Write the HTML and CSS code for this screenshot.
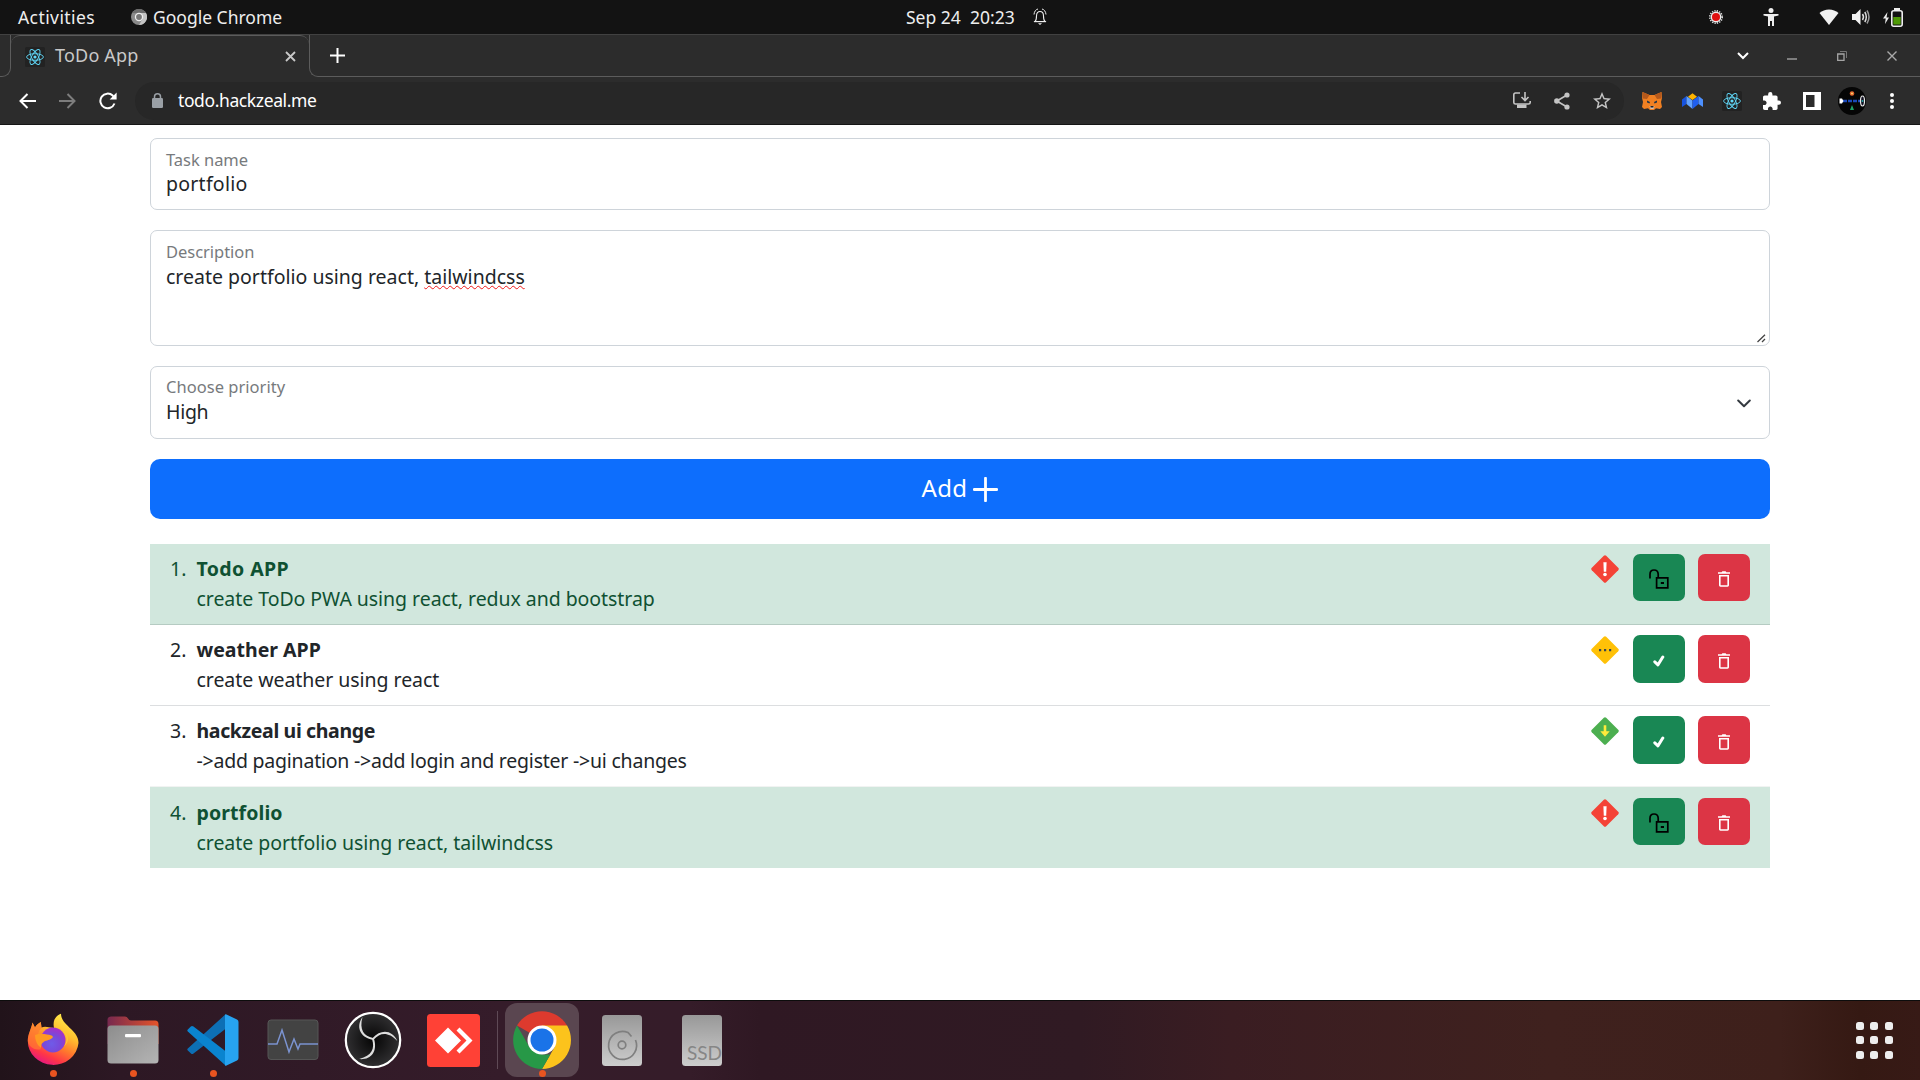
FILE: index.html
```html
<!DOCTYPE html>
<html lang="en">
<head>
<meta charset="utf-8">
<title>ToDo App</title>
<link rel="stylesheet" href="styles.css">
</head>
<body>
<svg class="defs" width="0" height="0">
  <defs>
    <linearGradient id="gFox" x1="0.8" y1="0" x2="0.3" y2="1"><stop offset="0" stop-color="#fff14f"/><stop offset=".35" stop-color="#ffc02f"/><stop offset=".6" stop-color="#ff7a2c"/><stop offset=".82" stop-color="#ff3647"/><stop offset="1" stop-color="#e31587"/></linearGradient>
    <radialGradient id="gGlobe" cx=".45" cy=".65" r=".6"><stop offset="0" stop-color="#6f5be8"/><stop offset=".6" stop-color="#7a48d8"/><stop offset="1" stop-color="#a233c9"/></radialGradient>
    <linearGradient id="gFolderBack" x1="0" y1="0" x2="1" y2="0"><stop offset="0" stop-color="#77294f"/><stop offset="1" stop-color="#e5542a"/></linearGradient>
    <linearGradient id="gFolder" x1="0" y1="0" x2="1" y2="1"><stop offset="0" stop-color="#8d8d8d"/><stop offset="1" stop-color="#b4b4b4"/></linearGradient>
    <linearGradient id="gDisk" x1="0" y1="0" x2="0" y2="1"><stop offset="0" stop-color="#989898"/><stop offset="1" stop-color="#cdcdcd"/></linearGradient>
    <radialGradient id="gObs"><stop offset="0" stop-color="#050505"/><stop offset="1" stop-color="#302f31"/></radialGradient>
    <symbol id="react" viewBox="0 0 20 20"><rect width="20" height="20" rx="1.5" fill="#222"/><g fill="none" stroke="#61dafb" stroke-width=".9"><ellipse cx="10" cy="10" rx="8.4" ry="3.3"/><ellipse cx="10" cy="10" rx="8.4" ry="3.3" transform="rotate(60 10 10)"/><ellipse cx="10" cy="10" rx="8.4" ry="3.3" transform="rotate(120 10 10)"/></g><circle cx="10" cy="10" r="1.6" fill="#61dafb"/></symbol>
    <symbol id="high" viewBox="0 0 28 28"><path d="M12.8.8a1.7 1.7 0 0 1 2.4 0l12 12a1.7 1.7 0 0 1 0 2.4l-12 12a1.7 1.7 0 0 1-2.4 0l-12-12a1.7 1.7 0 0 1 0-2.4z" fill="#f44336"/><path d="M12.4 7.2h3.2l-.4 9.6h-2.4z" fill="#fff"/><circle cx="14" cy="19.5" r="1.8" fill="#fff"/></symbol>
    <symbol id="unlock" viewBox="0 0 20 20"><path d="M1 9.600V5.200Q1 1 5 1t4.200 4.200V8.600M7.600 8.900h11.200v9.900H7.600z" fill="none" stroke="#000" stroke-width="1.700"/><path d="M11.800 13h3.200v2h-3.200z" fill="#000"/></symbol>
    <symbol id="check" viewBox="0 0 12 12"><path d="M1.800 6.800l3.200 3 4.800-7.800" fill="none" stroke="#fff" stroke-width="3" stroke-linecap="round" stroke-linejoin="round"/></symbol>
    <symbol id="trash" viewBox="0 0 12 16"><path d="M0 1.200h3.600L4.400.3h3.200l.8.9H12v1.500H0zM1 4h10v10.300a1.400 1.400 0 0 1-1.400 1.400H2.400A1.400 1.400 0 0 1 1 14.300zM2.600 5.400v8.800h6.800V5.400z" fill="#fff" fill-rule="evenodd"/></symbol>
  </defs>
</svg>

<header class="topbar">
  <div class="topbar-left">
    <span class="activities">Activities</span>
    <span class="appmenu">
      <svg width="16" height="16" viewBox="0 0 16 16"><circle cx="8" cy="8" r="8" fill="#8a8a8a"/><path d="M8 4h7a8 8 0 0 1-7 12l3.500-6z" fill="#c4c4c4"/><path d="M1.100 4A8 8 0 0 1 15 4H8z" fill="#6c6c6c"/><circle cx="8" cy="8" r="4.200" fill="#eee"/><circle cx="8" cy="8" r="2.900" fill="#777"/></svg>
      <span class="appname">Google Chrome</span>
    </span>
  </div>
  <div class="clock"><span class="date">Sep 24</span><span class="time">20:23</span>
    <svg width="14" height="18" viewBox="0 0 14 18" fill="none" stroke="#eee"><path d="M2 13.500c1.200-1 1.500-2.500 1.500-5.500 0-3 1.500-4.500 3.500-4.500s3.500 1.500 3.500 4.500c0 3 .3 4.500 1.500 5.500z" stroke-width="1.100"/><path d="M1 6.500C1.200 3.500 3 1.300 5 1M13 6.500C12.800 3.500 11 1.300 9 1M1 13.700h12" stroke-width="1"/><path d="M5 15.200h4L7 17z" fill="#eee" stroke="none"/></svg>
  </div>
  <div class="status">
    <svg class="s-rec" width="16" height="16" viewBox="0 0 16 16"><circle cx="8" cy="8" r="6.200" fill="none" stroke="#ddd" stroke-width="1.600" stroke-dasharray="1.300 1.134"/><circle cx="8" cy="8" r="5.400" fill="#eee"/><circle cx="8" cy="8" r="4" fill="#e01010"/></svg>
    <svg class="s-a11y" width="16" height="18" viewBox="0 0 16 18" fill="#eee"><circle cx="8" cy="2.500" r="2.500"/><path d="M.5 6h15v1.600L11 8.500V18H9v-5H7v5H5V8.500L.5 7.600z"/></svg>
    <svg class="s-wifi" width="20" height="16" viewBox="0 0 20 16" fill="#f2f2f2"><path d="M.5 4Q4.500.5 10 .5T19.500 4L10 16z"/></svg>
    <svg class="s-vol" width="18" height="18" viewBox="0 0 18 18" fill="none" stroke="#ddd" stroke-width="1.500"><path d="M0 6h3.500L8.500 1v16L3.500 12H0z" fill="#f2f2f2" stroke="none"/><path d="M10.500 6q2 3 0 6M12.800 4q3 5 0 10"/><path d="M15 2.500q4 6.500 0 13" stroke="#999"/></svg>
    <svg class="s-bat" width="20" height="19" viewBox="0 0 20 19"><path d="M4.500 4L0 10.500h2.700L2 16l4-6.500H3.500z" fill="#eee"/><rect x="8.800" y="2.800" width="10.400" height="15.400" rx="2" fill="none" stroke="#eee" stroke-width="1.600"/><path d="M11 0h6v2h-6z" fill="#eee"/><path d="M10.300 9h7.400v7.500h-7.400z" fill="#4e9a06"/></svg>
  </div>
</header>

<div class="tabstrip">
  <div class="tab-pre"></div>
  <div class="tab">
    <svg width="20" height="20"><use href="#react"/></svg>
    <span class="tab-title">ToDo App</span>
    <svg class="tab-close" width="11" height="11" viewBox="0 0 11 11"><path d="M1 1l9 9M10 1l-9 9" stroke="#c8c8c8" stroke-width="1.800"/></svg>
  </div>
  <div class="tab-rest">
    <svg width="15" height="15" viewBox="0 0 15 15"><path d="M7.500 0v15M0 7.500h15" stroke="#fff" stroke-width="2"/></svg>
    <div class="win">
      <svg class="tab-search" width="12" height="8" viewBox="0 0 12 8"><path d="M1 1l5 5 5-5" fill="none" stroke="#fff" stroke-width="2"/></svg>
      <svg width="10" height="12" viewBox="0 0 10 12"><path d="M0 9h10" stroke="#9a9a9a" stroke-width="1.500"/></svg>
      <svg width="10" height="10" viewBox="0 0 10 10"><path d="M.7 3h6.300v6.300H.7z" fill="none" stroke="#a5a5a5" stroke-width="1.300"/><path d="M3 .5h6.500V7" fill="none" stroke="#777"/></svg>
      <svg width="10" height="10" viewBox="0 0 10 10"><path d="M.5.5l9 9M9.500.5l-9 9" stroke="#aaa" stroke-width="1.400"/></svg>
    </div>
  </div>
</div>

<div class="toolbar">
  <div class="nav">
    <svg width="18" height="16" viewBox="0 0 18 16" fill="none" stroke="#fff" stroke-width="2"><path d="M17 8H2M8.500 1L1.500 8l7 7"/></svg>
    <svg width="18" height="16" viewBox="0 0 18 16" fill="none" stroke="#7d7d7d" stroke-width="2"><path d="M0 8h15M8.500 1l7 7-7 7"/></svg>
    <svg width="18" height="18" viewBox="0 0 18 18"><path d="M15.500 11.500A7.300 7.300 0 1 1 13.700 3.600L16 6" fill="none" stroke="#fff" stroke-width="2"/><path d="M17.600.5v7h-7z" fill="#fff"/></svg>
  </div>
  <div class="omnibox">
    <svg width="11" height="15" viewBox="0 0 11 15"><rect y="5" width="11" height="10" rx="1.200" fill="#9aa0a6"/><path d="M2.500 6V3.800a3 3 0 0 1 6 0V6" fill="none" stroke="#9aa0a6" stroke-width="1.500"/></svg>
    <span class="url">todo.hackzeal.me</span>
    <div class="cells omni-actions">
      <span><svg width="18" height="17" viewBox="0 0 18 17" fill="none" stroke="#c4c4c4" stroke-width="1.600"><path d="M7 1H2.500Q.8 1 .8 2.700V10.500q0 1.500 1.700 1.500h13q1.700 0 1.700-1.500V9"/><path d="M12 0v8M8.500 5L12 8.500 15.500 5"/><path d="M4 12.500h9.500V16H4z" fill="#c4c4c4" stroke="none"/></svg></span>
      <span><svg width="16" height="18" viewBox="0 0 16 18" fill="#c4c4c4"><path d="M2.800 9L13 3M2.800 9L13 15" stroke="#c4c4c4" stroke-width="1.600"/><circle cx="2.800" cy="9" r="2.700"/><circle cx="13" cy="3" r="2.600"/><circle cx="13" cy="15" r="2.600"/></svg></span>
      <span><svg width="18" height="18" viewBox="2 2 20 20" fill="#c4c4c4"><path d="M22 9.240l-7.190-.62L12 2 9.190 8.630 2 9.240l5.460 4.730L5.820 21 12 17.270 18.180 21l-1.630-7.030L22 9.240zM12 15.400l-3.760 2.270 1-4.280-3.320-2.880 4.380-.38L12 6.100l1.710 4.040 4.380.38-3.320 2.880 1 4.280L12 15.400z"/></svg></span>
    </div>
  </div>
  <div class="cells exts">
    <span><svg width="20" height="20" viewBox="0 0 20 20"><path d="M.5 1L7.500 4h5l7-3L20 7l-1 4 1 5-2 2-4-.7L12 19H8l-2-1.700L2 18l-2-2 1-5-1-4z" fill="#f08022"/><path d="M.5 1L7.500 4 5 8 .5 7.500zM19.500 1l-7 3L15 8l4.500-.5z" fill="#b5591c"/><path d="M5 9.500l3 1.500-.5 1.500L5 11.500zM15 9.500L12 11l.5 1.500 2.500-1z" fill="#233447"/><path d="M7.500 15h5l-1 3h-3z" fill="#d7c1b3"/><path d="M8.500 15h3v1.500h-3z" fill="#222"/></svg></span>
    <span><svg width="21" height="16" viewBox="0 0 21 16"><path d="M0 6.500L4.500 3v8L0 14z" fill="#1653e0"/><path d="M4.500 3l6 4.500V16l-6-5z" fill="#63a4ff"/><path d="M16.500 3l-6 4.500V16l6-5z" fill="#1f5ff0"/><path d="M16.500 3L21 6.500V14l-4.500-3z" fill="#4d90ff"/><path d="M10.500.3L15 3.700 10.500 7 6 3.700z" fill="#ffb400"/></svg></span>
    <span><svg width="20" height="20"><use href="#react"/></svg></span>
    <span><svg width="18" height="18" viewBox="2 1 21 21" fill="#fff"><path d="M20.500 11H19V7c0-1.100-.9-2-2-2h-4V3.500a2.500 2.500 0 0 0-5 0V5H4c-1.100 0-1.990.9-1.990 2v3.800H3.500c1.490 0 2.700 1.210 2.700 2.700s-1.210 2.700-2.700 2.700H2V20c0 1.100.9 2 2 2h3.800v-1.500c0-1.490 1.210-2.700 2.700-2.700s2.700 1.210 2.700 2.700V22H17c1.100 0 2-.9 2-2v-4h1.500a2.500 2.500 0 0 0 0-5z"/></svg></span>
    <span><svg width="18" height="18" viewBox="0 0 18 18"><path d="M0 0h18v18H0z" fill="#fff"/><path d="M3 3h8.500v12H3z" fill="#2b2b2b"/></svg></span>
    <span><svg width="28" height="28" viewBox="0 0 28 28"><circle cx="14" cy="14" r="14" fill="#050505"/><path d="M5 14h18" stroke="#1a48b8" stroke-width="2.500" stroke-dasharray="4 1"/><circle cx="14" cy="6.500" r="1.700" fill="#f4d06a" stroke="#e0612a" stroke-width="1.300"/><path d="M1.500 11.500h2.500l1.500 2.500L4 16.500H1.500z" fill="#fff"/><ellipse cx="24.500" cy="14" rx="2" ry="5" fill="#112" stroke="#e8e8e8" stroke-width="1.200"/><circle cx="24.500" cy="14" r="1" fill="#2aa"/><path d="M14 18l2 5h-4z" fill="#1fa067"/></svg></span>
    <span><svg width="4" height="16" viewBox="0 0 4 16" fill="#fff"><circle cx="2" cy="2" r="2"/><circle cx="2" cy="8" r="2"/><circle cx="2" cy="14" r="2"/></svg></span>
  </div>
</div>

<main class="page">
  <div class="field field-name"><label>Task name</label><div class="value">portfolio</div></div>
  <div class="field field-desc"><label>Description</label><div class="value">create portfolio using react, <span class="misspelt">tailwindcss</span></div>
    <svg class="grip" width="9" height="9" viewBox="0 0 9 9"><path d="M.5 8L8 .8M5 8l3-3" stroke="#444" stroke-width="1.300"/></svg></div>
  <div class="field field-prio">
    <div><label>Choose priority</label><div class="value">High</div></div>
    <svg width="14" height="9" viewBox="0 0 14 9"><path d="M1.200 1.500L7 7.200l5.800-5.700" fill="none" stroke="#343a40" stroke-width="2" stroke-linecap="round" stroke-linejoin="round"/></svg>
  </div>
  <button class="add"><span>Add</span><svg width="25" height="25" viewBox="0 0 25 25"><path d="M12.500 1.200v22.600M1.200 12.500h22.600" stroke="#fff" stroke-width="2.800" stroke-linecap="round"/></svg></button>

  <div class="list">
    <div class="row done">
      <span class="num">1.</span>
      <div class="text"><b class="t1">Todo APP</b><p>create ToDo PWA using react, redux and bootstrap</p></div>
      <svg class="prio" width="28" height="28"><use href="#high"/></svg>
      <span class="btn green"><svg width="20" height="20"><use href="#unlock"/></svg></span>
      <span class="btn red"><svg width="12" height="16"><use href="#trash"/></svg></span>
    </div>
    <div class="row">
      <span class="num">2.</span>
      <div class="text"><b>weather APP</b><p>create weather using react</p></div>
      <svg class="prio" width="28" height="28" viewBox="0 0 28 28"><path d="M12.800.8a1.700 1.700 0 0 1 2.400 0l12 12a1.700 1.700 0 0 1 0 2.400l-12 12a1.700 1.700 0 0 1-2.400 0l-12-12a1.700 1.700 0 0 1 0-2.400z" fill="#ffc107"/><path d="M8 13h2.200v2.200H8zM13 13h2.200v2.200H13zM18 13h2.200v2.200H18z" fill="#37474f"/></svg>
      <span class="btn green"><svg width="12" height="12"><use href="#check"/></svg></span>
      <span class="btn red"><svg width="12" height="16"><use href="#trash"/></svg></span>
    </div>
    <div class="row before-done">
      <span class="num">3.</span>
      <div class="text"><b class="t3">hackzeal ui change</b><p class="d3">-&gt;add pagination -&gt;add login and register -&gt;ui changes</p></div>
      <svg class="prio" width="28" height="28" viewBox="0 0 28 28"><path d="M12.800.8a1.700 1.700 0 0 1 2.400 0l12 12a1.700 1.700 0 0 1 0 2.400l-12 12a1.700 1.700 0 0 1-2.400 0l-12-12a1.700 1.700 0 0 1 0-2.400z" fill="#4caf50"/><path d="M12.700 8.200h2.600v6h3.400L14 19.800l-4.700-5.600h3.400z" fill="#ffeb3b"/></svg>
      <span class="btn green"><svg width="12" height="12"><use href="#check"/></svg></span>
      <span class="btn red"><svg width="12" height="16"><use href="#trash"/></svg></span>
    </div>
    <div class="row done">
      <span class="num">4.</span>
      <div class="text"><b class="t4">portfolio</b><p>create portfolio using react, tailwindcss</p></div>
      <svg class="prio" width="28" height="28"><use href="#high"/></svg>
      <span class="btn green"><svg width="20" height="20"><use href="#unlock"/></svg></span>
      <span class="btn red"><svg width="12" height="16"><use href="#trash"/></svg></span>
    </div>
  </div>
</main>

<footer class="dock">
  <div class="app running"><svg width="52" height="54" viewBox="0 0 52 54"><path d="M.8 28C.8 21 4 17 5.500 9.500L8 14.500C9 12 12 10 13.800 9L14.500 14.500Q17 13.500 20 14L27 15C25.500 8 28 3 34 .8 34 7 39 11 44 16 48 20 51.500 24 51.500 30A25.400 24 0 0 1 .8 28z" fill="url(#gFox)"/><path d="M.8 28C1 21 4 17 5.500 9.500L8 14.500C9 12 12 10 13.800 9L14.500 14.500C10 20 8 28 14 36 8 38 1.500 34 .8 28z" fill="#ff7a30" opacity=".7"/><circle cx="26" cy="27" r="12.500" fill="url(#gGlobe)"/><path d="M8 22c5-2 9-1 12-.5 3 .5 5 .5 6 2.500-2 3-5 3-8 4-3 2-4 3-4 7-4-3-6-8-6-13z" fill="#ff9a22"/><path d="M31 15.500c9 3 11 11 6 18 6-5 6-14-6-18z" fill="#ffc93a"/></svg></div>
  <div class="app running"><svg width="52" height="48" viewBox="0 0 52 48"><path d="M.5 4Q.5.5 4 .5h14q2 0 3 2t3 2h24q3.500 0 3.500 3.500v20H.5z" fill="url(#gFolderBack)"/><rect x=".5" y="9.500" width="51" height="38" rx="3.500" fill="url(#gFolder)"/><rect x="18" y="18" width="16" height="3.200" rx="1" fill="#fff"/></svg></div>
  <div class="app running"><svg width="52" height="52" viewBox="0 0 52 52"><path d="M.8 34.500L38 .8v14.500L6.500 39.500Q5 40.500 4 39.500L.8 36.500q-1-1 0-2z" fill="#0d6fb5"/><path d="M.8 15.500l3-3Q5 11.500 6.500 12.500L38 36.800V51L.8 17.500q-1-1 0-2z" fill="#0a84cf"/><path d="M38 .5q.8-.4 1.500 0L50 5.500q1.500.8 1.500 2.500v36q0 1.700-1.500 2.500L39.500 51.500q-.7.4-1.500 0z" fill="#27a3f0"/></svg></div>
  <div class="app"><svg width="52" height="42" viewBox="0 0 52 42"><rect x="1" y="1" width="50" height="39.500" rx="3" fill="#434343" stroke="#565656"/><path d="M1 25h9l5-14 7 22 5-13 4 10 2-5h18" fill="none" stroke="#7b93d0" stroke-width="1.500"/></svg></div>
  <div class="app"><svg width="58" height="58" viewBox="0 0 58 58"><circle cx="29" cy="29" r="27.200" fill="url(#gObs)" stroke="#fff" stroke-width="2.200"/><path d="M29 27C20 25 15 19 18.500 6 12 15 15 26 29 29z" fill="#ddd"/><path d="M29 27C20 25 15 19 18.500 6 12 15 15 26 29 29z" fill="#ddd" transform="rotate(120 29 28)"/><path d="M29 27C20 25 15 19 18.500 6 12 15 15 26 29 29z" fill="#ddd" transform="rotate(240 29 28)"/></svg></div>
  <div class="app"><svg width="53" height="53" viewBox="0 0 53 53"><rect width="53" height="53" rx="3.500" fill="#ff4136"/><path d="M8 26.500l13-13 13 13-13 13zM29.500 16.500l3-3 13 13-13 13-3-3 10-10z" fill="#fff"/></svg></div>
  <div class="sep"></div>
  <div class="app active running"><svg width="58" height="58" viewBox="0 0 58 58"><path d="M29 29L4 14.500A29 29 0 0 1 54 14.500z" fill="#dd3a2e"/><path d="M29 14.500h25.100A29 29 0 0 1 29 58l12.500-21.700z" fill="#fcc31c"/><path d="M4 14.500L16.500 36.300 29 43.500h8.400L29 58A29 29 0 0 1 4 14.500z" fill="#279847"/><circle cx="29" cy="29" r="14.500" fill="#fff"/><circle cx="29" cy="29" r="11.500" fill="#1a73e8"/></svg></div>
  <div class="app"><svg width="40" height="51" viewBox="0 0 40 51"><rect width="40" height="51" rx="3.500" fill="url(#gDisk)"/><path d="M33.500 25A14 14 0 1 1 26 17.500L29.500 21.500" fill="none" stroke="#7f7f7f" stroke-width="1.700"/><circle cx="20" cy="30" r="3.800" fill="none" stroke="#7f7f7f" stroke-width="1.700"/></svg></div>
  <div class="app"><div class="ssd"><span>SSD</span></div></div>
  <div class="grid"><i></i><i></i><i></i><i></i><i></i><i></i><i></i><i></i><i></i></div>
</footer>
</body>
</html>
```
FILE: styles.css
```css
* { box-sizing: border-box; }
body { margin: 0; width: 1920px; height: 1080px; overflow: hidden; display: flex; flex-direction: column; background: #fff; color: #212529; font-family: "Noto Sans", sans-serif; font-size: 19.5px; }
svg { display: block; flex: none; }
.defs { position: absolute; }
p { margin: 0; }

.topbar { height: 34px; flex: none; display: grid; grid-template-columns: 906px auto 1fr; align-items: center; background: #131313; color: #eee; font-size: 17.5px; line-height: 34px; white-space: nowrap; }
.topbar-left { display: flex; padding-left: 18px; }
.activities { width: 113px; letter-spacing: .42px; }
.appmenu { display: flex; align-items: center; gap: 6px; }
.clock { display: flex; align-items: center; line-height: 33px; }
.date { width: 64px; }
.time { width: 63px; }
.status { display: flex; align-items: center; justify-content: flex-end; padding-right: 17px; }
.s-rec { margin-right: 39px; }
.s-a11y { margin-right: 40px; }
.s-wifi { margin-right: 13px; }
.s-vol { margin-right: 13px; }

.tabstrip { height: 43px; flex: none; display: flex; background: #2c2c2c; border-top: 1px solid #414141; }
.tab-pre { width: 11px; border: solid #5c5c5c; border-width: 0 1px 1px 0; border-bottom-right-radius: 9px; }
.tab { width: 298px; display: flex; align-items: center; padding: 0 13.5px 0 14px; border-top: 1px solid #5c5c5c; border-radius: 9px 9px 0 0; }
.tab-title { margin-left: 10px; padding-bottom: 3px; color: #c9c9c9; font-size: 18px; line-height: 37px; letter-spacing: .2px; }
.tab-close { margin-left: auto; }
.tab-rest { flex: 1; display: flex; align-items: center; justify-content: space-between; padding: 0 23px 0 20px; border: solid #5c5c5c; border-width: 0 0 1px 1px; border-bottom-left-radius: 9px; }
.win { display: flex; align-items: center; gap: 40px; }
.tab-search { margin-right: -2px; }

.toolbar { height: 48px; flex: none; display: flex; align-items: center; background: #2c2c2c; border-bottom: 1px solid #161616; }
.nav { width: 135px; padding-left: 19px; display: flex; align-items: center; gap: 22px; }
.omnibox { width: 1489px; height: 38px; border-radius: 19px; background: #272727; display: flex; align-items: center; padding: 0 2px 0 17px; }
.url { margin-left: 15px; padding-bottom: 1.5px; color: #fff; font-size: 17.5px; letter-spacing: -.39px; }
.cells { display: flex; }
.cells > span { width: 40px; display: flex; align-items: center; justify-content: center; }
.omni-actions { margin-left: auto; }
.exts { margin-left: 8px; }

.page { flex: 1; min-height: 0; padding: 13px 150px 0; display: flex; flex-direction: column; }
.field { position: relative; border: 1px solid #ced4da; border-radius: 7px; padding: 10px 15px; flex: none; }
.field label { display: block; font-size: 16.5px; line-height: 21px; letter-spacing: -.03px; color: #777a7d; }
.value { line-height: 28px; white-space: nowrap; }
.field-name { height: 72px; margin-bottom: 20px; }
.field-name .value { letter-spacing: .25px; }
.field-desc { height: 116px; margin-bottom: 20px; }
.field-desc .value { padding-top: 1px; }
.field-prio { height: 73px; margin-bottom: 20px; display: flex; justify-content: space-between; align-items: flex-start; padding: 10px 18px 0 15px; }
.field-prio label { line-height: 20px; padding-bottom: 1px; letter-spacing: .03px; }
.field-prio .value { letter-spacing: -.3px; }
.field-prio svg { margin-top: 22px; }
.misspelt { text-decoration: underline wavy #f01818 1px; text-decoration-skip-ink: none; text-underline-offset: 1px; }
.grip { position: absolute; right: 3px; bottom: 2px; }
.add { height: 60px; flex: none; border: 0; border-radius: 10px; background: #0d6efd; color: #fff; font: 24px/58px "Noto Sans", sans-serif; letter-spacing: .3px; display: flex; align-items: center; justify-content: center; gap: 6px; padding: 0; margin-bottom: 25px; }
.add span { padding-bottom: 2px; }
.add svg { margin-top: 1px; }

.list { flex: none; }
.row { height: 81px; display: flex; align-items: flex-start; padding: 10px 20px 0; line-height: 30px; border-bottom: 1px solid #dcdee0; }
.row:last-child { border-bottom: 0; padding-top: 11px; }
.row p { letter-spacing: -.05px; }
.row .d3 { letter-spacing: -.226px; }
.before-done { border-bottom-color: #f1f3f2; }
.done { background: #d1e7dd; color: #0f5132; border-bottom-color: #b5cbc2; }
.num { width: 26.5px; }
.text { flex: 1; }
.text b { display: block; }
.t1 { letter-spacing: .4px; }
.t3 { letter-spacing: -.36px; }
.t4 { letter-spacing: .1px; }
.prio { margin: 1px 14px 0 0; }
.btn { width: 52px; height: 48px; border-radius: 7px; display: flex; align-items: center; justify-content: center; padding-top: 4px; }
.done .btn { height: 47px; padding-top: 3px; }
.green { background: #198754; margin-right: 13px; }
.red { background: #dc3545; }

.dock { height: 80px; flex: none; display: flex; align-items: flex-start; padding: 2px 0 0 13px; border-top: 1px solid #0c0c0c; background: linear-gradient(90deg, #21131a 0, #2d1824 120px, #351c2a 500px, #351c29 690px, #2f1823 760px, #301a23 1080px, #3a1d22 1230px, #3f211e 1550px, #3e201b 1780px, #351913 1860px, #371a16 100%); }
.app { position: relative; width: 80px; height: 74px; display: flex; align-items: center; justify-content: center; }
.running::after { content: ""; position: absolute; bottom: 0; left: calc(50% - 3.5px); width: 7px; height: 7px; border-radius: 50%; background: #e95420; }
.sep { width: 1px; height: 58px; margin: 8px 7px 0 4px; background: #5f4a56; }
.active { width: 74px; border-radius: 12px; background: #5a4650; margin-right: 3px; }
.ssd { width: 40px; height: 51px; border-radius: 3.5px; background: linear-gradient(#989898, #cdcdcd); display: flex; align-items: flex-end; justify-content: flex-end; overflow: hidden; font: 19px/27px Lato, sans-serif; color: #868686; }
.grid { margin: 18.5px 27.5px 0 auto; display: grid; grid-template-columns: repeat(3, 8px); gap: 6.5px; }
.grid i { height: 8px; border-radius: 2.5px; background: #eee; }
```
